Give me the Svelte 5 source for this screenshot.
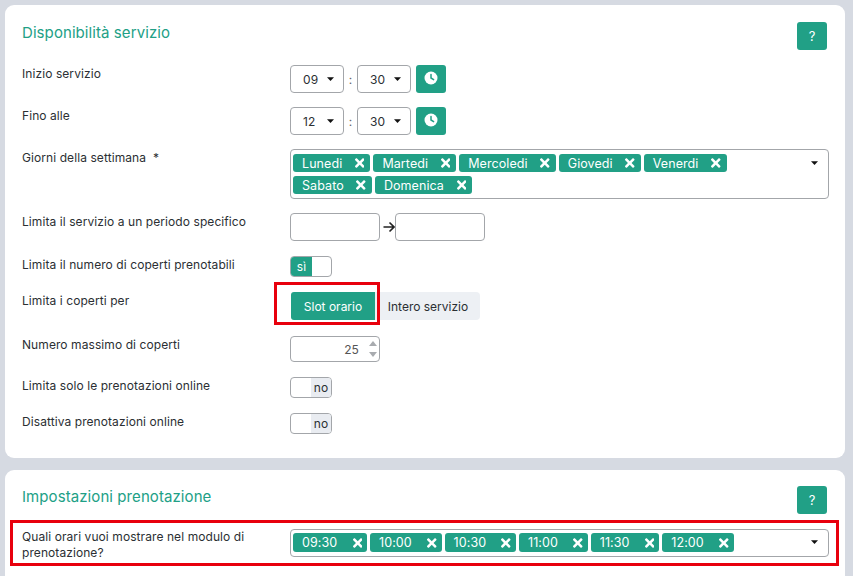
<script>
  const days = [
    ['Lunedi', 'Martedi', 'Mercoledi', 'Giovedi', 'Venerdi'],
    ['Sabato', 'Domenica']
  ];
  const slots = ['09:30', '10:00', '10:30', '11:00', '11:30', '12:00'];
  const times = [
    { label: 'Inizio servizio', hour: '09', minute: '30' },
    { label: 'Fino alle', hour: '12', minute: '30' }
  ];
  const timesIcon = 'M242.72 256l100.07-100.07c12.28-12.28 12.28-32.19 0-44.48l-22.24-22.24c-12.28-12.28-32.19-12.28-44.48 0L176 189.28 75.93 89.21c-12.28-12.28-32.19-12.28-44.48 0L9.21 111.45c-12.28 12.28-12.28 32.19 0 44.48L109.28 256 9.21 356.07c-12.28 12.28-12.28 32.19 0 44.48l22.24 22.24c12.28 12.28 32.2 12.28 44.48 0L176 322.72l100.07 100.07c12.28 12.28 32.2 12.28 44.48 0l22.24-22.24c12.28-12.28 12.28-32.19 0-44.48L242.72 256z';
</script>

{#snippet tag(text)}
  <span class="tag">
    <span>{text}</span>
    <svg class="x" viewBox="0 0 352 512"><path d={timesIcon} /></svg>
  </span>
{/snippet}

{#snippet caret()}
  <svg class="caret" viewBox="0 0 10 6"><path d="M0 0h10L5 5.5z" /></svg>
{/snippet}

<main>
  <section class="card first">
    <header>
      <h2>Disponibilità servizio</h2>
      <button class="help">?</button>
    </header>

    {#each times as t}
      <div class="row time-row">
        <div class="label">{t.label}</div>
        <div class="control">
          <div class="select">{t.hour}{@render caret()}</div>
          <span class="colon">:</span>
          <div class="select">{t.minute}{@render caret()}</div>
          <button class="clock" aria-label="orario">
            <svg viewBox="0 0 14 14" width="14" height="14">
              <circle cx="7" cy="7" r="6.5" fill="#fff" />
              <path d="M7 3.4V7l2.6 1.7" fill="none" stroke="#21a086" stroke-width="1.5" stroke-linecap="round" />
            </svg>
          </button>
        </div>
      </div>
    {/each}

    <div class="row days-row">
      <div class="label">Giorni della settimana&nbsp; *</div>
      <div class="tagbox">
        <div class="taglines">
          {#each days as line}
            <div class="tagline">
              {#each line as d}{@render tag(d)}{/each}
            </div>
          {/each}
        </div>
        {@render caret()}
      </div>
    </div>

    <div class="row period-row">
      <div class="label">Limita il servizio a un periodo specifico</div>
      <div class="control tight">
        <div class="input"></div>
        <svg class="arrow" viewBox="0 0 12 12" width="12" height="12">
          <path d="M0.5 6H11M6.5 1.5 11 6l-4.5 4.5" fill="none" stroke="#222" stroke-width="1.6" />
        </svg>
        <div class="input"></div>
      </div>
    </div>

    <div class="row toggle-row">
      <div class="label">Limita il numero di coperti prenotabili</div>
      <div class="toggle on"><span class="state">sì</span><span class="blank"></span></div>
    </div>

    <div class="row segment-row">
      <div class="label">Limita i coperti per</div>
      <div class="segment">
        <span class="redbox slot-mark"></span>
        <button class="seg active">Slot orario</button>
        <button class="seg">Intero servizio</button>
      </div>
    </div>

    <div class="row number-row">
      <div class="label">Numero massimo di coperti</div>
      <div class="number">
        <span>25</span>
        <span class="spin">
          <svg viewBox="0 0 8 5" width="8" height="5"><path d="M4 0l4 5H0z" /></svg>
          <svg viewBox="0 0 8 5" width="8" height="5"><path d="M0 0h8L4 5z" /></svg>
        </span>
      </div>
    </div>

    <div class="row toggle-row">
      <div class="label">Limita solo le prenotazioni online</div>
      <div class="toggle"><span class="blank"></span><span class="state">no</span></div>
    </div>

    <div class="row toggle-row last">
      <div class="label">Disattiva prenotazioni online</div>
      <div class="toggle"><span class="blank"></span><span class="state">no</span></div>
    </div>
  </section>

  <section class="card second">
    <header>
      <h2>Impostazioni prenotazione</h2>
      <button class="help">?</button>
    </header>

    <div class="row slots-row">
      <span class="redbox row-mark"></span>
      <div class="label">Quali orari vuoi mostrare nel modulo di prenotazione?</div>
      <div class="tagbox slots">
        <div class="tagline">
          {#each slots as s}{@render tag(s)}{/each}
        </div>
        {@render caret()}
      </div>
    </div>
  </section>
</main>

<style>
  :global(body) {
    background: #d6dae2;
    overflow: hidden;
  }
  main {
    height: 576px;
    overflow: hidden;
    padding: 5px 8px 0 5px;
    box-sizing: border-box;
    font-family: Inter, "Liberation Sans", sans-serif;
    font-size: 12px;
    letter-spacing: 0.08px;
    color: #2b2f33;
  }
  .card {
    background: #fff;
    border-radius: 9px;
    padding: 17px 16px 24px 17px;
  }
  .second {
    margin-top: 12px;
    padding-top: 16px;
    padding-bottom: 40px;
  }
  header {
    display: flex;
    justify-content: space-between;
    padding-right: 2px;
    margin-bottom: 15px;
  }
  h2 {
    margin: 0;
    font-size: 15px;
    font-weight: 400;
    line-height: 21px;
    letter-spacing: 0.08px;
    color: #21a086;
  }
  .help {
    width: 30px;
    height: 28px;
    border: none;
    border-radius: 3px;
    background: #21a086;
    color: #fff;
    font: inherit;
    font-size: 13px;
    padding: 0;
  }
  .row {
    display: flex;
    position: relative;
    margin-bottom: 14px;
  }
  .period-row { margin-bottom: 15px; }
  .toggle-row { margin-bottom: 15px; }
  .toggle-row.last { margin-bottom: 0; }
  .segment-row { margin-bottom: 16px; }
  .number-row { margin-bottom: 15px; }
  .label {
    width: 268px;
    flex: none;
    box-sizing: border-box;
    padding-right: 30px;
    line-height: 17px;
  }
  .control {
    display: flex;
    align-items: center;
  }
  .select {
    width: 54px;
    height: 28px;
    box-sizing: border-box;
    border: 1px solid #a3a6aa;
    border-radius: 4px;
    display: flex;
    align-items: center;
    justify-content: space-between;
    padding: 0 9px 0 12px;
  }
  .caret {
    width: 7px;
    height: 4.5px;
    fill: #111;
  }
  .colon {
    width: 13px;
    text-align: center;
    color: #666;
  }
  .clock {
    width: 30px;
    height: 28px;
    margin-left: 5px;
    border: none;
    border-radius: 3px;
    background: #21a086;
    padding: 0 0 2px;
    display: flex;
    align-items: center;
    justify-content: center;
  }
  .tagbox {
    flex: 1;
    box-sizing: border-box;
    border: 1px solid #a3a6aa;
    border-radius: 4px;
    display: flex;
    justify-content: space-between;
    padding: 4px 10px 4px 2px;
  }
  .tagbox > .caret {
    margin-top: 7px;
  }
  .taglines {
    display: flex;
    flex-direction: column;
    gap: 4px;
  }
  .tagline {
    display: flex;
    gap: 3px;
  }
  .tag {
    height: 18px;
    display: inline-flex;
    align-items: center;
    justify-content: space-between;
    gap: 12.6px;
    padding: 0 6px 0 9px;
    border-radius: 3px;
    background: #21a086;
    color: #fff;
    font-size: 12.5px;
  }
  .x {
    width: 9.5px;
    height: 14px;
    fill: #fff;
  }
  .input {
    width: 90px;
    height: 28px;
    box-sizing: border-box;
    border: 1px solid #a3a6aa;
    border-radius: 4px;
  }
  .arrow {
    margin: 0 0 0 3px;
  }
  .toggle {
    width: 42px;
    height: 21px;
    box-sizing: border-box;
    border: 1px solid #a3a6aa;
    border-radius: 4px;
    display: flex;
    overflow: hidden;
  }
  .toggle .state {
    width: 20px;
    text-align: center;
    line-height: 19px;
    background: #e9ecf1;
  }
  .toggle.on .state {
    width: 21px;
    background: #21a086;
    color: #fff;
  }
  .blank { flex: 1; }
  .segment {
    display: flex;
    position: relative;
    margin-left: 1px;
  }
  .seg {
    width: 105px;
    height: 28px;
    border: none;
    background: #edf0f4;
    color: #2b2f33;
    font: inherit;
    padding: 0 0 0 1px;
    border-radius: 0 4px 4px 0;
  }
  .seg.active {
    width: 84px;
    padding: 0;
    background: #21a086;
    color: #fff;
    border-radius: 3px 0 0 3px;
  }
  .number {
    width: 90px;
    height: 26px;
    box-sizing: border-box;
    border: 1px solid #a3a6aa;
    border-radius: 4px;
    display: flex;
    align-items: center;
    justify-content: flex-end;
    gap: 10px;
    padding-right: 2px;
    color: #555;
  }
  .spin {
    display: flex;
    flex-direction: column;
    gap: 6px;
    fill: #a8abaf;
  }
  .slots-row {
    margin: 0;
  }
  .slots-row .label {
    line-height: 16px;
  }
  .slots {
    height: 28px;
    padding: 3px 10px 3px 2px;
  }
  .slots .tag {
    height: 19px;
    gap: 15.3px;
    padding-right: 5px;
  }
  .redbox {
    position: absolute;
    box-sizing: border-box;
    border: 3px solid #e8000d;
    pointer-events: none;
  }
  .slot-mark {
    left: -17px;
    top: -10px;
    width: 106px;
    height: 43px;
  }
  .row-mark {
    left: -12px;
    top: -9px;
    width: 829px;
    height: 46px;
  }
</style>
